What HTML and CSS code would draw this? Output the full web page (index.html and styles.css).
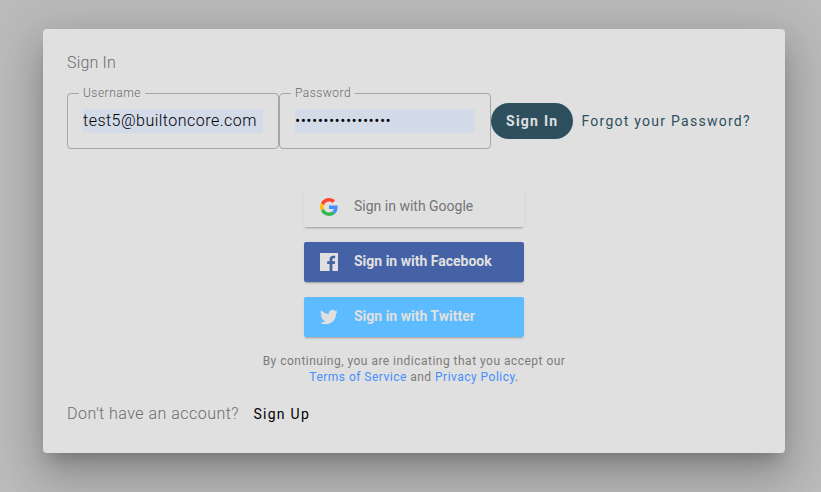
FILE: index.html
```
<!DOCTYPE html>
<html lang="en">
<head>
<meta charset="utf-8">
<meta name="viewport" content="width=device-width, initial-scale=1">
<title>Sign In</title>
<link rel="stylesheet" href="styles.css">
</head>
<body>
<main class="dialog">
  <h1 class="title">Sign In</h1>
  <form class="login">
    <fieldset class="field">
      <legend><label for="username">Username</label></legend>
      <input id="username" type="text" value="test5@builtoncore.com">
    </fieldset>
    <fieldset class="field">
      <legend><label for="password">Password</label></legend>
      <input id="password" type="password" value="abcdefghijklmnopq">
    </fieldset>
    <button class="submit" type="button">Sign In</button>
    <a class="forgot" href="#">Forgot your Password?</a>
  </form>
  <div class="providers">
    <button class="provider google" type="button">
      <svg viewBox="0 0 48 48" aria-hidden="true"><path fill="#ff4131" d="M24 9.5c3.54 0 6.71 1.22 9.21 3.6l6.85-6.85C35.9 2.38 30.47 0 24 0 14.62 0 6.51 5.38 2.56 13.22l7.98 6.19C12.43 13.72 17.74 9.5 24 9.5z"/><path fill="#4a8fff" d="M46.98 24.55c0-1.57-.15-3.09-.38-4.55H24v9.02h12.94c-.58 2.96-2.26 5.48-4.78 7.18l7.73 6c4.51-4.18 7.09-10.36 7.09-17.65z"/><path fill="#fcc010" d="M10.53 28.59c-.48-1.45-.76-2.99-.76-4.59s.27-3.14.76-4.59l-7.98-6.19C.92 16.46 0 20.12 0 24c0 3.88.92 7.54 2.56 10.78l7.97-6.19z"/><path fill="#36b755" d="M24 48c6.48 0 11.93-2.13 15.89-5.81l-7.73-6c-2.15 1.45-4.92 2.3-8.16 2.3-6.26 0-11.57-4.22-13.47-9.91l-7.98 6.19C6.51 42.62 14.62 48 24 48z"/></svg>
      <span>Sign in with Google</span>
    </button>
    <button class="provider facebook" type="button">
      <svg viewBox="0 0 18 18" aria-hidden="true"><path fill="currentColor" d="M0 0h18v18h-5.600v-7h2.400l.35-2.700H12.400V6.600c0-.8.25-1.300 1.350-1.300h1.450V2.850c-.25 0-1.100-.1-2.100-.1-2.100 0-3.500 1.250-3.500 3.600V8.300H7.200V11h2.400v7H0z"/></svg>
      <span>Sign in with Facebook</span>
    </button>
    <button class="provider twitter" type="button">
      <svg viewBox="0 0 24 24" aria-hidden="true"><path fill="currentColor" d="M24 4.600a10 10 0 0 1-2.800.8 5 5 0 0 0 2.150-2.700 10 10 0 0 1-3.130 1.200 4.920 4.920 0 0 0-8.380 4.480A14 14 0 0 1 1.670 3.150a4.900 4.900 0 0 0 1.520 6.570 4.900 4.900 0 0 1-2.230-.62v.06a4.900 4.900 0 0 0 3.950 4.830 5 5 0 0 1-2.220.08 4.900 4.900 0 0 0 4.600 3.420A9.900 9.900 0 0 1 0 19.540a14 14 0 0 0 7.550 2.210c9.050 0 14-7.500 14-14v-.64A10 10 0 0 0 24 4.600z"/></svg>
      <span>Sign in with Twitter</span>
    </button>
  </div>
  <p class="terms">By continuing, you are indicating that you accept our <a href="#">Terms of Service</a> and <a href="#">Privacy Policy</a>.</p>
  <p class="account">Don't have an account? <a href="#">Sign Up</a></p>
</main>
</body>
</html>
```
FILE: styles.css
```
* {
  box-sizing: border-box;
}

body {
  margin: 0;
  padding: 29px 36px 39px 43px;
  min-height: 100vh;
  background: #bababa;
  font-family: Roboto, "Liberation Sans", sans-serif;
}

a {
  text-decoration: none;
}

.dialog {
  padding: 24px 24px 27px;
  border-radius: 4px;
  background: #e0e0e0;
  color: #6c6c6c;
  box-shadow: 0 11px 15px -7px rgba(0, 0, 0, .2), 0 24px 38px 3px rgba(0, 0, 0, .14), 0 9px 46px 8px rgba(0, 0, 0, .12);
}

.title {
  margin: 0 0 12px;
  font-size: 16px;
  font-weight: 300;
  line-height: 20px;
  letter-spacing: .01em;
}

.login {
  display: flex;
  align-items: center;
}

.field {
  flex: 0 1 212px;
  min-width: 0;
  margin: 0;
  padding: 0 15px 15px 11px;
  border: 1px solid #a6a6a6;
  border-radius: 4px;
}

.field legend {
  height: 16px;
  padding: 0 4px;
  font-size: 12px;
  font-weight: 300;
  line-height: 16px;
  letter-spacing: .04em;
}

.field input {
  display: block;
  width: calc(100% - 4px);
  height: 24px;
  margin: 8px 0 0 4px;
  padding: 0 0 2px;
  border: 0;
  background: #d3dae8;
  color: #000;
  font: 300 16px Roboto, "Liberation Sans", sans-serif;
  letter-spacing: .03em;
}

.submit {
  height: 36px;
  margin-top: 8px;
  padding: 0 15px;
  border: 0;
  border-radius: 18px;
  background: #2d4f5e;
  color: #e0e0e0;
  font: 700 14px Roboto, "Liberation Sans", sans-serif;
  letter-spacing: .09em;
  white-space: nowrap;
}

.forgot {
  margin-top: 8px;
  padding: 0 8px;
  color: #2d4f5e;
  font-size: 14px;
  letter-spacing: .09em;
  white-space: nowrap;
}

.providers {
  display: flex;
  flex-direction: column;
  gap: 15px;
  width: 220px;
  margin: 38px auto 16px;
}

.provider {
  display: flex;
  align-items: center;
  gap: 16px;
  height: 40px;
  padding: 0 16px;
  border: 0;
  border-radius: 2px;
  color: #e0e0e0;
  font: 700 14px Roboto, "Liberation Sans", sans-serif;
  box-shadow: 0 2px 2px 0 rgba(0, 0, 0, .07), 0 3px 1px -2px rgba(0, 0, 0, .15), 0 1px 5px 0 rgba(0, 0, 0, .03);
}

.provider svg {
  width: 18px;
  height: 18px;
}

.provider span {
  padding-bottom: 2px;
}

.google {
  background: #e0e0e0;
  color: #757575;
  font-weight: 400;
}

.facebook {
  background: #4462a5;
}

.twitter {
  background: #5dbbff;
}

.terms {
  max-width: 320px;
  margin: 0 auto 17px;
  color: #7c7c7c;
  font-size: 12px;
  line-height: 16px;
  letter-spacing: .04em;
  text-align: center;
}

.account {
  margin: 0;
  font-size: 16px;
  font-weight: 300;
  line-height: 24px;
  letter-spacing: .03em;
}

.terms a {
  color: #468fff;
}

.account a {
  margin-left: 10px;
  color: #000;
  font-size: 14px;
  font-weight: 400;
  letter-spacing: .09em;
}
```
